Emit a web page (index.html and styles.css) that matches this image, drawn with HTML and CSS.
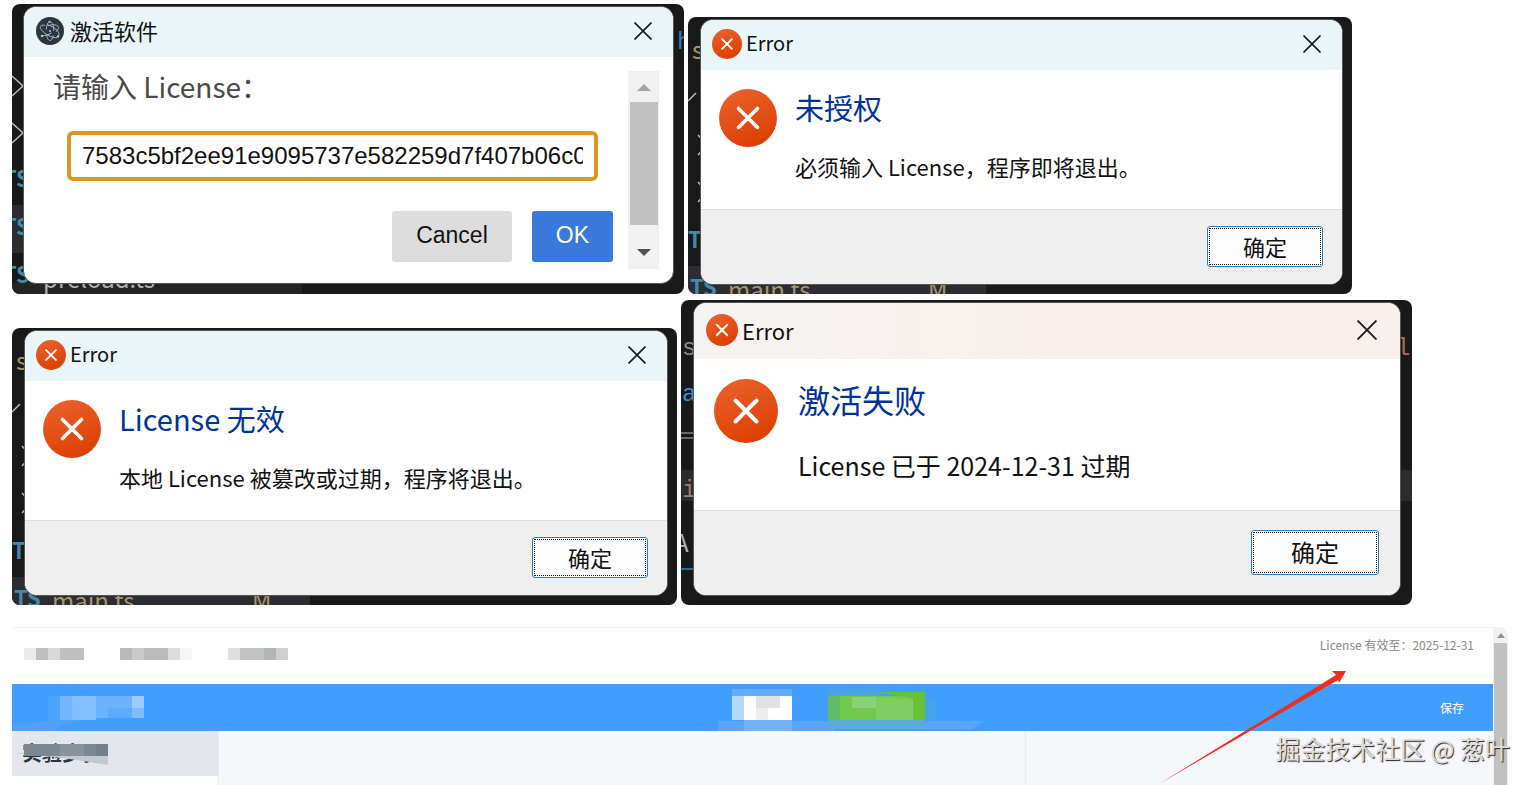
FILE: index.html
```
<!DOCTYPE html>
<html lang="zh-CN">

<head>
    <meta charset="UTF-8">
    <meta name="viewport" content="width=device-width,initial-scale=1.0">
    <title>License 激活</title>
    <link rel="stylesheet" href="styles.css">
</head>

<body>
    <!-- Shared icons -->
    <svg class="defs" aria-hidden="true">
        <defs>
            <linearGradient id="errorFill" x1="0.2" y1="0" x2="0.6" y2="1">
                <stop offset="0" stop-color="#e9622a" />
                <stop offset="1" stop-color="#dc3f04" />
            </linearGradient>
            <symbol id="error" viewBox="0 0 58 58">
                <circle cx="29" cy="29" r="29" fill="url(#errorFill)" />
                <path d="M19.500 19.500L38.500 38.500M38.500 19.500L19.500 38.500" stroke="#fff" stroke-width="3.600" stroke-linecap="round" />
            </symbol>
            <symbol id="close" viewBox="0 0 18 18">
                <path d="M0.500 0.500L17.500 17.500M17.500 0.500L0.500 17.500" stroke="#1a1d1e" stroke-width="1.700" />
            </symbol>
        </defs>
    </svg>

    <main class="shots">
        <div class="row row-top">
            <!-- Prompt -->
            <section class="shot shot-prompt">
                <svg class="editor" aria-hidden="true">
                    <path d="M0 72l11 10l-11 10M0 119l11 10l-11 10" fill="none" stroke="#b9b9b9" stroke-width="1.500" />
                    <rect y="201" width="14" height="48" fill="#2b2d33" />
                    <rect y="279" width="290" height="11" fill="#242424" />
                    <g class="ts">
                        <text x="-9" y="183">TS</text>
                        <text x="-9" y="231">TS</text>
                        <text x="-9" y="279">TS</text>
                    </g>
                    <text class="file-gray" x="31" y="284">preload.ts</text>
                    <text class="code-blue" x="665" y="45">h</text>
                </svg>
                <div class="window">
                    <header class="titlebar">
                        <svg class="title-icon" viewBox="0 0 28 28">
                            <circle cx="14" cy="14" r="14" fill="#2c3641" />
                            <g fill="none" stroke="#a9b8c1" stroke-width="1">
                                <path d="M9 8.300C6.500 7.900 4.900 8.400 4.400 9.500C3.600 11.500 7 15.500 12 18.200C15.500 20.200 18.800 21 21 20.600" />
                                <path d="M12 8.500C16 7.400 20.500 7.500 22 9.200C23 10.500 22.200 12.500 20.200 14.600" />
                                <path d="M22.500 19C24.300 16.500 21 12.500 16.500 9.900C14.500 8.800 12.500 8 11 7.700" />
                                <path d="M10.500 17C10.900 20.800 12.300 23.500 14 23.500C15.500 23.500 16.800 21.500 17.300 18.500" />
                                <path d="M17.800 14C17.800 8.800 16.200 4.700 14 4.700C12 4.700 10.500 8 10.300 12.500" />
                                <path d="M6.500 18.500C8.500 19 12 18 15.500 16" />
                            </g>
                            <g fill="#b9c7cf">
                                <circle cx="14" cy="14" r="1" />
                                <circle cx="13.500" cy="4.800" r="1" />
                                <circle cx="6" cy="19" r="1.200" />
                                <circle cx="22" cy="19.500" r="1.200" />
                            </g>
                        </svg>
                        <h2 class="title">激活软件</h2>
                        <button class="close" aria-label="关闭"><svg><use href="#close" /></svg></button>
                    </header>
                    <div class="prompt">
                        <form class="prompt-form">
                            <label for="license">请输入 License：</label>
                            <input id="license" type="text" value="7583c5bf2ee91e9095737e582259d7f407b06c0">
                            <div class="prompt-btns">
                                <button type="button" class="cancel">Cancel</button>
                                <button type="button" class="ok">OK</button>
                            </div>
                        </form>
                        <div class="scrollbar">
                            <svg class="arrow" viewBox="0 0 14 7"><path d="M0 7L7 0L14 7z" fill="#a3a3a3" /></svg>
                            <div class="thumb"></div>
                            <svg class="arrow" viewBox="0 0 14 7"><path d="M0 0L7 7L14 0z" fill="#505050" /></svg>
                        </div>
                    </div>
                </div>
            </section>

            <!-- Not authorised -->
            <section class="shot">
                <svg class="editor" aria-hidden="true">
                    <rect y="249" width="298" height="28" fill="#2b2d33" />
                    <text class="file-yellow" x="4" y="42">s</text>
                    <path d="M0 84l8 -8M10 118l9 10l-9 10M10 165l9 10l-9 10" fill="none" stroke="#b9b9b9" stroke-width="1.500" />
                    <g class="ts">
                        <text x="0" y="231">TS</text>
                        <text x="2" y="279">TS</text>
                    </g>
                    <text class="file-yellow" x="40" y="282">main.ts</text>
                    <text class="file-yellow" x="240" y="282">M</text>
                </svg>
                <div class="window">
                    <header class="titlebar">
                        <svg class="title-icon"><use href="#error" /></svg>
                        <h2 class="title">Error</h2>
                        <button class="close" aria-label="关闭"><svg><use href="#close" /></svg></button>
                    </header>
                    <div class="content">
                        <svg class="big-icon"><use href="#error" /></svg>
                        <div>
                            <h3>未授权</h3>
                            <p>必须输入 License，程序即将退出。</p>
                        </div>
                    </div>
                    <footer><button class="confirm">确定</button></footer>
                </div>
            </section>
        </div>

        <div class="row row-bottom">
            <!-- Invalid license -->
            <section class="shot">
                <svg class="editor" aria-hidden="true">
                    <rect y="249" width="298" height="28" fill="#2b2d33" />
                    <text class="file-yellow" x="4" y="42">s</text>
                    <path d="M0 84l8 -8M10 118l9 10l-9 10M10 165l9 10l-9 10" fill="none" stroke="#b9b9b9" stroke-width="1.500" />
                    <g class="ts">
                        <text x="0" y="231">TS</text>
                        <text x="2" y="279">TS</text>
                    </g>
                    <text class="file-yellow" x="40" y="282">main.ts</text>
                    <text class="file-yellow" x="240" y="282">M</text>
                </svg>
                <div class="window">
                    <header class="titlebar">
                        <svg class="title-icon"><use href="#error" /></svg>
                        <h2 class="title">Error</h2>
                        <button class="close" aria-label="关闭"><svg><use href="#close" /></svg></button>
                    </header>
                    <div class="content">
                        <svg class="big-icon"><use href="#error" /></svg>
                        <div>
                            <h3>License 无效</h3>
                            <p>本地 License 被篡改或过期，程序将退出。</p>
                        </div>
                    </div>
                    <footer><button class="confirm">确定</button></footer>
                </div>
            </section>

            <!-- Activation failed -->
            <section class="shot shot-large">
                <svg class="editor" aria-hidden="true">
                    <rect y="170" width="100%" height="31" fill="#2b2b2b" />
                    <g class="code">
                        <text x="1" y="55" fill="#8a8a8a">s</text>
                        <text x="1" y="101" fill="#3a8fc8">a</text>
                        <text x="1" y="197" fill="#9a7f70">i</text>
                        <text x="715" y="55" fill="#a8695c">l</text>
                    </g>
                    <path d="M0 133h14M0 138h14" stroke="#b9b9b9" />
                    <text class="file-gray" x="-7" y="252">A</text>
                    <rect y="268" width="14" height="2" fill="#1b6ea8" />
                </svg>
                <div class="window">
                    <header class="titlebar">
                        <svg class="title-icon"><use href="#error" /></svg>
                        <h2 class="title">Error</h2>
                        <button class="close" aria-label="关闭"><svg><use href="#close" /></svg></button>
                    </header>
                    <div class="content">
                        <svg class="big-icon"><use href="#error" /></svg>
                        <div>
                            <h3>激活失败</h3>
                            <p>License 已于 2024-12-31 过期</p>
                        </div>
                    </div>
                    <footer><button class="confirm">确定</button></footer>
                </div>
            </section>
        </div>
    </main>

    <!-- Main app -->
    <section class="app">
        <div class="page">
            <header class="app-header">
                <svg class="tabs" width="270" height="14" viewBox="0 0 270 14">
                    <path d="M0 1h12v12h-12z" fill="#ececec" />
                    <path d="M12 1h12v12h-12z" fill="#bfbfbf" />
                    <path d="M24 1h12v12h-12z" fill="#d9d9d9" />
                    <path d="M36 1h24v12h-24z" fill="#c0c0c0" />
                    <path d="M96 1h12v12h-12z" fill="#b9b9b9" />
                    <path d="M108 1h12v12h-12z" fill="#c9c9c9" />
                    <path d="M120 1h24v12h-24z" fill="#bababa" />
                    <path d="M144 1h12v12h-12z" fill="#dcdcdc" />
                    <path d="M156 1h12v12h-12z" fill="#f6f6f6" />
                    <path d="M204 1h12v12h-12z" fill="#dedede" />
                    <path d="M216 1h24v12h-24z" fill="#c2c2c2" />
                    <path d="M240 1h12v12h-12z" fill="#b1b5b3" />
                    <path d="M252 1h12v12h-12z" fill="#cfcfcf" />
                </svg>
                <span class="expire">License 有效至：2025-12-31</span>
            </header>
            <nav class="toolbar">
                <svg width="150" height="47" viewBox="0 0 150 47">
                    <path d="M0 42q40 -8 76 -7q-24 4 -35 12h-41z" fill="#50a1f8" />
                    <path d="M36 12h12v24h-12z" fill="#4ba3ff" />
                    <path d="M48 12h12v24h-12z" fill="#72b6ff" />
                    <path d="M60 12h24v24h-24z" fill="#83bfff" />
                    <path d="M84 12h36v22h-36z" fill="#6cb3ff" />
                    <path d="M96 24h24v10h-24z" fill="#5eabfb" />
                    <path d="M120 12h12v22h-12z" fill="#7fbcff" />
                    <path d="M120 12h12v12h-12z" fill="#9bccff" />
                </svg>
                <svg width="270" height="47" viewBox="0 0 270 47">
                    <path d="M0 37h266l-12 8h-138v2h-116z" fill="#56a7f7" />
                    <path d="M14 5h60v7h-60z" fill="#62aefb" />
                    <path d="M14 12h12v24h-12z" fill="#b5d8ff" />
                    <path d="M26 12h48v24h-48z" fill="#fff" />
                    <path d="M38 12h24v12h-24z" fill="#e1e1e1" />
                    <path d="M38 24h12v12h-12z" fill="#ededed" />
                    <path d="M26 36h48v11h-48z" fill="#71b3f7" />
                    <path d="M110 5h48l8 7h-56z" fill="#4ba6db" />
                    <path d="M110 12h12v24h-12z" fill="#5fbd66" />
                    <path d="M122 12h85v24h-85z" fill="#71c94e" />
                    <path d="M158 8h49v28h-12v-22z" fill="#67c23a" />
                    <path d="M134 13h24v11h-24z" fill="#8bd175" />
                    <path d="M158 13l37 2v21h-37z" fill="#80ce61" />
                    <path d="M110 36h97v9h-97z" fill="#59acd8" />
                    <path d="M207 15h10v20h-10z" fill="#47a2e8" />
                </svg>
                <button class="save">保存</button>
            </nav>
            <div class="panels">
                <aside>
                    <h4>实验步骤</h4>
                    <svg class="mask" width="100" height="28" viewBox="0 0 100 28">
                        <path d="M0 12q44 3 96 12v-12z" fill="#c4c9d0" />
                        <path d="M12 3h84v12h-84z" fill="#7b8791" />
                        <path d="M48 3h24v12h-24z" fill="#89939c" />
                        <path d="M84 3h12v12h-12z" fill="#73808a" />
                    </svg>
                </aside>
                <div class="panel-main"></div>
                <div class="panel-side"></div>
            </div>
        </div>
        <div class="app-scroll">
            <svg width="8" height="5" viewBox="0 0 8 5"><path d="M0 5L4 0L8 5z" fill="#929292" /></svg>
            <div class="app-thumb"></div>
        </div>
        <svg class="pointer" width="188" height="114" viewBox="0 0 188 114" aria-hidden="true">
            <path d="M0 113L177 4L173 0H187L180 12L179 9z" fill="#ee2c20" />
        </svg>
        <span class="watermark">掘金技术社区 @ 葱叶</span>
    </section>
</body>

</html>
```
FILE: styles.css
```
* {
    padding: 0;
    margin: 0;
    box-sizing: border-box;
}

body {
    display: flex;
    flex-direction: column;
    height: 100vh;
    overflow: hidden;
    background: #fefefe;
    color: #111;
    font-family: "Noto Sans CJK SC", sans-serif;
}

button {
    border: none;
    font-family: inherit;
    cursor: pointer;
}

svg {
    display: block;
    flex: none;
}

h2,
h3 {
    font-weight: normal;
}

.defs {
    position: absolute;
    width: 0;
    height: 0;
}

/* Rows of dialogs */
.shots {
    display: flex;
    flex-direction: column;
    gap: 6px;
    padding: 4px 0 0 12px;
}

.row {
    display: grid;
    gap: 4px;
    align-items: end;
}

.row-top {
    grid-template-columns: 672fr 664fr 177fr;
}

.row-bottom {
    grid-template-columns: 665fr 731fr 117fr;
}

.shot {
    position: relative;
    padding: 2px 9px 9px 12px;
    border-radius: 8px;
    background: #191919;
    overflow: hidden;
}

.shot-prompt {
    padding: 2px 10px 10px 11px;
}

.shot-large {
    padding: 2px 11px 9px 12px;
}

/* Code editor visible behind the dialog */
.editor {
    position: absolute;
    top: 0;
    left: 0;
    width: 100%;
    height: 100%;
}

.editor text {
    font-size: 24px;
}

.editor .ts text {
    fill: #4389a8;
    font-size: 22px;
    font-weight: bold;
}

.file-gray {
    fill: #b0b0b0;
}

.file-yellow {
    fill: #a8946b;
}

.code-blue {
    fill: #2f7fb8;
}

.code text,
.code-blue {
    font-family: "Liberation Mono", monospace;
}

/* Dialog window */
.window {
    position: relative;
    border: 1px solid #555;
    border-radius: 13px;
    background: #fff;
    overflow: hidden;
}

.titlebar {
    display: flex;
    align-items: center;
    gap: 4px;
    height: 50px;
    padding: 0 21px 2px 11px;
    background: #eaf5f8;
}

.title-icon {
    width: 30px;
    height: 30px;
}

.title {
    flex: 1;
    padding-bottom: 2px;
    font-size: 20px;
    line-height: 32px;
}

.close {
    background: none;
}

.close svg {
    width: 18px;
    height: 18px;
}

.content {
    display: flex;
    gap: 18px;
    height: 140px;
    padding: 19px 18px 0;
    border-bottom: 1px solid #dfdfdf;
}

.big-icon {
    width: 58px;
    height: 58px;
}

.content h3 {
    margin-bottom: 25px;
    color: #003399;
    font-size: 29px;
    line-height: 36px;
}

.content p {
    font-size: 22px;
    line-height: 32px;
}

footer {
    display: flex;
    justify-content: flex-end;
    height: 74px;
    padding: 16px 19px 0;
    background: #efefef;
}

.confirm {
    width: 116px;
    height: 41px;
    padding-bottom: 2px;
    border: 1px solid #2b7fb8;
    border-radius: 3px;
    outline: 1px dotted #111;
    outline-offset: -3px;
    background: #fdfdfd;
    color: #111;
    font-size: 22px;
}

/* Larger dialog */
.shot-large .titlebar {
    height: 56px;
    padding: 0 23px 2px 12px;
    background: linear-gradient(to right, #f5f3f2, #f9f0ec 50%);
}

.shot-large .title-icon {
    width: 32px;
    height: 32px;
}

.shot-large .title {
    padding-bottom: 0;
    font-size: 22px;
}

.shot-large .close svg {
    width: 20px;
    height: 20px;
}

.shot-large .content {
    gap: 20px;
    height: 152px;
    padding: 20px 20px 0;
}

.shot-large .big-icon {
    width: 64px;
    height: 64px;
}

.shot-large h3 {
    margin-bottom: 30px;
    font-size: 32px;
    line-height: 40px;
}

.shot-large p {
    font-size: 25px;
}

.shot-large footer {
    height: 84px;
    padding: 19px 21px 0;
}

.shot-large .confirm {
    width: 128px;
    height: 45px;
    font-size: 24px;
}

/* Prompt dialog */
.shot-prompt .titlebar {
    gap: 6px;
    padding-left: 12px;
}

.shot-prompt .title-icon {
    width: 28px;
    height: 28px;
}

.shot-prompt .title {
    font-size: 22px;
}

.prompt {
    display: flex;
    padding: 14px;
}

.prompt-form {
    display: flex;
    flex: 1;
    flex-direction: column;
    min-width: 0;
    padding: 0 15px;
}

.prompt-form label {
    color: #4a4a4a;
    font-size: 28px;
    line-height: 30px;
}

.prompt-form input {
    height: 50px;
    margin: 30px 15px 30px 14px;
    padding: 0 11px;
    border: 4px solid #d8991c;
    border-radius: 6px;
    outline: none;
    background: #fff;
    color: #111;
    font-family: "Liberation Sans", sans-serif;
    font-size: 24px;
}

.prompt-btns {
    display: flex;
    justify-content: flex-end;
    gap: 20px;
}

.prompt-btns button {
    height: 51px;
    padding: 0 24px 2px;
    border-radius: 3px;
    font-family: "Liberation Sans", sans-serif;
    font-size: 23px;
}

.cancel {
    background: #dddddd;
    color: #111;
}

.ok {
    background: #3879d9;
    color: #fff;
}

.scrollbar {
    display: flex;
    flex-direction: column;
    align-items: center;
    gap: 11px;
    width: 31px;
    height: 198px;
    padding: 13px 0;
    background: #f1f1f1;
}

.arrow {
    width: 14px;
    height: 7px;
}

.thumb {
    width: 28px;
    height: 123px;
    margin-bottom: 13px;
    background: #c1c1c1;
}

/* Main app */
.app {
    position: relative;
    display: flex;
    flex: 1;
    min-height: 0;
    margin: 22px 25px 0 12px;
    border-top: 1px solid #f2f2f2;
    border-radius: 0 8px 0 0;
}

.page {
    display: flex;
    flex: 1;
    flex-direction: column;
}

.app-header {
    display: flex;
    justify-content: space-between;
    height: 56px;
    padding: 8px 19px 0 12px;
}

.tabs {
    margin-top: 11px;
}

.expire {
    color: #8a8a8a;
    font-size: 12px;
    line-height: 18px;
}

.toolbar {
    display: grid;
    grid-template-columns: 706fr 270fr 505fr;
    align-items: center;
    height: 47px;
    background: #409eff;
}

.save {
    justify-self: end;
    margin-right: 29px;
    background: none;
    color: #fff;
    font-size: 12px;
}

.panels {
    display: grid;
    grid-template-columns: 206fr 807fr 468fr;
    flex: 1;
}

aside {
    position: relative;
    height: 45px;
    padding: 11px 10px;
    background: #e3e6ed;
}

aside h4 {
    color: #2c3440;
    font-size: 20px;
    line-height: 22px;
}

.mask {
    position: absolute;
    top: 10px;
    left: 0;
}

.panel-main,
.panel-side {
    border-left: 1px solid #e9ebf0;
    background: #f5f7fb;
}

.app-scroll {
    display: flex;
    flex-direction: column;
    align-items: center;
    gap: 5px;
    width: 15px;
    padding-top: 5px;
    border-radius: 0 8px 0 0;
    background: #f1f1f1;
}

.app-thumb {
    flex: 1;
    width: 13px;
    background: #c1c1c1;
}

/* Arrow and watermark lie over the app */
.pointer {
    position: absolute;
    top: 43px;
    right: 161px;
}

.watermark {
    position: absolute;
    right: -2px;
    bottom: 19px;
    color: #dcdcdc;
    font-size: 25px;
    line-height: 36px;
    text-shadow: 1px 1px 1px #222;
    white-space: nowrap;
}
```
